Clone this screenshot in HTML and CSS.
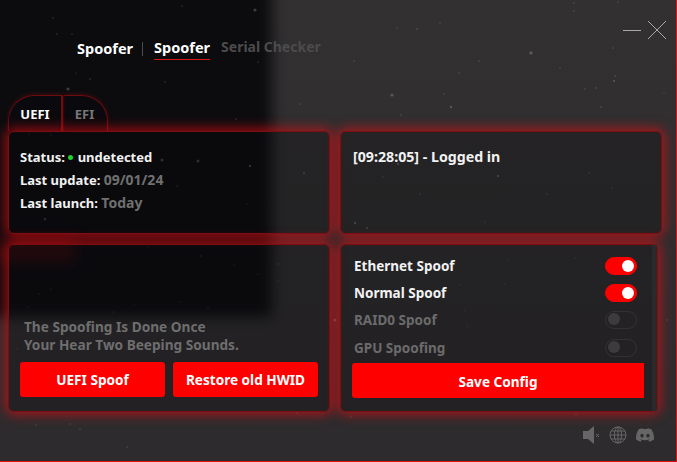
FILE: index.html
```html
<!DOCTYPE html>
<html lang="en">
<head>
  <meta charset="UTF-8">
  <title>Spoofer</title>
  <link rel="stylesheet" href="styles.css">
</head>
<body>
  <div class="window">
    <div class="shade"></div>
    <div class="blob"></div>
    <svg class="stars" width="677" height="462" viewBox="0 0 677 462">
      <g fill="#fff" fill-opacity="0.2">
        <circle cx="255" cy="10" r="1.6"/><circle cx="182" cy="6" r="0.7"/><circle cx="53" cy="18" r="0.7"/>
        <circle cx="57" cy="34" r="0.7"/><circle cx="72" cy="34" r="0.7"/><circle cx="68" cy="89" r="1.6"/>
        <circle cx="90" cy="79" r="0.8"/><circle cx="165" cy="82" r="0.7"/><circle cx="76" cy="73" r="0.6"/>
        <circle cx="258" cy="62" r="0.7"/><circle cx="300" cy="104" r="0.7"/><circle cx="236" cy="119" r="0.7"/>
        <circle cx="162" cy="160" r="1.6"/><circle cx="198" cy="161" r="1.5"/><circle cx="250" cy="166" r="1.3"/>
        <circle cx="304" cy="173" r="1"/><circle cx="177" cy="186" r="0.7"/><circle cx="45" cy="219" r="1.2"/>
        <circle cx="29" cy="134" r="0.6"/><circle cx="51" cy="135" r="0.6"/><circle cx="247" cy="204" r="0.6"/>
        <circle cx="136" cy="237" r="0.6"/><circle cx="148" cy="247" r="0.6"/><circle cx="201" cy="256" r="0.7"/>
        <circle cx="234" cy="265" r="0.6"/><circle cx="278" cy="264" r="0.7"/><circle cx="258" cy="274" r="0.6"/>
        <circle cx="278" cy="281" r="0.6"/><circle cx="51" cy="289" r="0.6"/><circle cx="39" cy="294" r="0.6"/>
        <circle cx="28" cy="307" r="0.6"/><circle cx="134" cy="304" r="0.6"/><circle cx="208" cy="308" r="0.6"/>
        <circle cx="113" cy="312" r="0.6"/><circle cx="180" cy="302" r="0.6"/><circle cx="17" cy="349" r="0.6"/>
        <circle cx="335" cy="320" r="1.6"/><circle cx="36" cy="425" r="0.7"/><circle cx="70" cy="424" r="0.7"/>
        <circle cx="80" cy="429" r="0.7"/><circle cx="127" cy="447" r="0.7"/><circle cx="297" cy="413" r="0.7"/>
        <circle cx="417" cy="29" r="0.8"/><circle cx="440" cy="23" r="0.7"/><circle cx="397" cy="28" r="0.7"/>
        <circle cx="354" cy="61" r="0.7"/><circle cx="479" cy="61" r="0.7"/><circle cx="459" cy="73" r="0.7"/>
        <circle cx="531" cy="53" r="1.7"/><circle cx="560" cy="68" r="0.7"/><circle cx="613" cy="48" r="0.7"/>
        <circle cx="615" cy="76" r="0.8"/><circle cx="614" cy="81" r="1.1"/><circle cx="596" cy="88" r="0.8"/>
        <circle cx="585" cy="89" r="0.7"/><circle cx="664" cy="93" r="0.6"/><circle cx="392" cy="95" r="1.6"/>
        <circle cx="444" cy="94" r="0.7"/><circle cx="451" cy="107" r="1.2"/><circle cx="601" cy="107" r="0.8"/>
        <circle cx="401" cy="115" r="0.7"/><circle cx="618" cy="2" r="0.7"/><circle cx="574" cy="3" r="0.7"/>
        <circle cx="574" cy="11" r="0.7"/><circle cx="383" cy="177" r="0.7"/><circle cx="398" cy="164" r="1.2"/>
        <circle cx="498" cy="176" r="1.2"/><circle cx="420" cy="194" r="0.7"/><circle cx="547" cy="194" r="0.7"/>
        <circle cx="589" cy="173" r="0.7"/><circle cx="612" cy="188" r="0.7"/><circle cx="355" cy="223" r="1.2"/>
        <circle cx="367" cy="228" r="1"/><circle cx="485" cy="222" r="0.6"/><circle cx="508" cy="260" r="0.6"/>
        <circle cx="575" cy="258" r="0.6"/><circle cx="505" cy="284" r="0.6"/><circle cx="460" cy="285" r="0.6"/>
        <circle cx="465" cy="310" r="0.6"/><circle cx="467" cy="326" r="0.6"/><circle cx="667" cy="320" r="0.7"/>
        <circle cx="576" cy="414" r="0.7"/><circle cx="351" cy="417" r="0.7"/>
      </g>
    </svg>

    <header class="topbar">
      <span class="brand">Spoofer</span>
      <span class="divider"></span>
      <nav class="nav">
        <a class="nav-item active">Spoofer</a>
        <a class="nav-item">Serial Checker</a>
      </nav>
      <div class="controls">
        <span class="minimize"></span>
        <svg class="close" width="18" height="18" viewBox="0 0 18 18">
          <path d="M0 0L18 18M18 0L0 18" stroke="#a9a9a9" stroke-width="1" fill="none"/>
        </svg>
      </div>
    </header>

    <div class="tabs">
      <div class="tab tab-on">UEFI</div>
      <div class="tab tab-off">EFI</div>
    </div>

    <main class="panels">
      <section class="card card-info">
        <div class="line">Status: <i class="dot"></i> undetected</div>
        <div class="line">Last update: <span class="muted">09/01/24</span></div>
        <div class="line">Last launch: <span class="muted">Today</span></div>
      </section>

      <section class="card card-log">
        <div class="line log-line">[09:28:05] - Logged in</div>
      </section>

      <section class="card card-actions">
        <p class="note">The Spoofing Is Done Once<br>Your Hear Two Beeping Sounds.</p>
        <div class="buttons">
          <button class="btn">UEFI Spoof</button>
          <button class="btn">Restore old HWID</button>
        </div>
      </section>

      <section class="card card-options">
        <div class="option"><span>Ethernet Spoof</span><span class="toggle on"></span></div>
        <div class="option"><span>Normal Spoof</span><span class="toggle on"></span></div>
        <div class="option off"><span>RAID0 Spoof</span><span class="toggle"></span></div>
        <div class="option off"><span>GPU Spoofing</span><span class="toggle"></span></div>
        <button class="btn btn-save">Save Config</button>
        <span class="scroll-track"></span>
      </section>
    </main>

    <footer class="tray">
      <svg width="18" height="18" viewBox="0 0 18 18">
        <path d="M1 5h5l6-5v18l-6-5H1z" fill="#666"/>
        <path d="M14 8l3 3M17 8l-3 3" stroke="#666" stroke-width="1" fill="none"/>
      </svg>
      <svg width="18" height="18" viewBox="0 0 18 18" fill="none" stroke="#666" stroke-width="1">
        <circle cx="9" cy="9" r="8"/>
        <ellipse cx="9" cy="9" rx="3.6" ry="8"/>
        <path d="M9 1v16M1 9h16M2 5h14M2 13h14"/>
      </svg>
      <svg width="18" height="18" viewBox="0 0 24 24">
        <path fill="#666" d="M20.317 4.37a19.791 19.791 0 0 0-4.885-1.515.074.074 0 0 0-.079.037c-.21.375-.444.864-.608 1.25a18.27 18.27 0 0 0-5.487 0 12.64 12.64 0 0 0-.617-1.25.077.077 0 0 0-.079-.037A19.736 19.736 0 0 0 3.677 4.37a.07.07 0 0 0-.032.027C.533 9.046-.32 13.58.099 18.057a.082.082 0 0 0 .031.057 19.9 19.9 0 0 0 5.993 3.03.078.078 0 0 0 .084-.028c.462-.63.874-1.295 1.226-1.994a.076.076 0 0 0-.041-.106 13.107 13.107 0 0 1-1.872-.892.077.077 0 0 1-.008-.128 10.2 10.2 0 0 0 .372-.292.074.074 0 0 1 .077-.01c3.928 1.793 8.18 1.793 12.062 0a.074.074 0 0 1 .078.01c.12.098.246.198.373.292a.077.077 0 0 1-.006.127 12.299 12.299 0 0 1-1.873.892.077.077 0 0 0-.041.107c.36.698.772 1.362 1.225 1.993a.076.076 0 0 0 .084.028 19.839 19.839 0 0 0 6.002-3.03.077.077 0 0 0 .032-.054c.5-5.177-.838-9.674-3.549-13.66a.061.061 0 0 0-.031-.03zM8.02 15.33c-1.183 0-2.157-1.085-2.157-2.419 0-1.333.956-2.419 2.157-2.419 1.21 0 2.176 1.096 2.157 2.42 0 1.333-.956 2.418-2.157 2.418zm7.975 0c-1.183 0-2.157-1.085-2.157-2.419 0-1.333.955-2.419 2.157-2.419 1.21 0 2.176 1.096 2.157 2.42 0 1.333-.946 2.418-2.157 2.418z"/>
      </svg>
    </footer>
  </div>
</body>
</html>
```

FILE: styles.css
```css
* {
  box-sizing: border-box;
}

html, body {
  margin: 0;
  height: 100%;
}

body {
  font-family: "Noto Sans", "Open Sans", sans-serif;
  font-weight: 700;
  font-size: 13px;
  color: #f2f2f2;
  background: #2f2d2e;
  overflow: hidden;
}

.window {
  position: relative;
  width: 677px;
  height: 462px;
  overflow: hidden;
  border-right: 1px solid #e01010;
  border-bottom: 1px solid #e01010;
  background: linear-gradient(#323031, #2d2b2d);
}

.shade {
  position: absolute;
  left: -30px;
  top: -30px;
  width: 302px;
  height: 347px;
  background: #0c0c0f;
  filter: blur(7px);
}

.blob {
  position: absolute;
  left: -10px;
  top: 238px;
  width: 85px;
  height: 24px;
  background: rgba(120, 10, 14, 0.3);
  filter: blur(7px);
}

.stars {
  position: absolute;
  left: 0;
  top: 0;
}

.topbar {
  position: relative;
  display: flex;
  align-items: flex-start;
  height: 95px;
  padding: 21px 10px 0 77px;
}

.brand {
  margin-top: 17px;
  font-size: 14.5px;
  line-height: 20px;
  color: #fff;
}

.divider {
  width: 1px;
  height: 14px;
  margin: 21px 11px 0 9px;
  background: #4d4d4d;
}

.nav {
  display: flex;
  gap: 11px;
  margin-top: 16px;
}

.nav-item {
  height: 23px;
  font-size: 14px;
  line-height: 20px;
  color: #4b4b4c;
}

.nav-item.active {
  font-size: 14.5px;
  color: #fff;
  border-bottom: 1px solid #d81414;
}

.controls {
  display: flex;
  align-items: center;
  gap: 7px;
  margin-left: auto;
}

.minimize {
  width: 18px;
  height: 1px;
  background: #a9a9a9;
}

.close {
  display: block;
}

.tabs {
  position: relative;
  display: flex;
  gap: 1px;
  height: 36px;
  margin-left: 8px;
}

.tab {
  display: flex;
  align-items: center;
  justify-content: center;
  height: 36px;
  border-top: 1px solid #6d0c10;
  background: rgba(8, 8, 12, 0.3);
  box-shadow: 0 -1px 4px rgba(200, 10, 14, 0.25);
}

.tab-on {
  width: 55px;
  border-left: 1px solid #5d0c10;
  border-right: 2px solid #6d0c10;
  border-top-left-radius: 26px;
  color: #fff;
}

.tab-off {
  width: 44px;
  padding-right: 2px;
  border-right: 1px solid #6d0c10;
  border-top-right-radius: 26px;
  color: #777;
}

.panels {
  position: relative;
  display: grid;
  grid-template-columns: 322px 322px;
  grid-template-rows: 103px 168px;
  gap: 10px;
  margin-left: 8px;
}

.card {
  position: relative;
  border: 1px solid #7c0e12;
  border-radius: 6px;
  background: rgba(8, 8, 12, 0.28);
  box-shadow: 0 0 12px 3px rgba(232, 12, 18, 0.62);
}

.card-info {
  padding: 14px 11px;
}

.card-log {
  padding: 13px 12px;
}

.line {
  height: 23px;
  line-height: 23px;
  white-space: nowrap;
}

.log-line {
  font-size: 14.2px;
}

.muted {
  font-size: 14px;
  line-height: 0;
  color: #707070;
}

.dot {
  display: inline-block;
  width: 5px;
  height: 5px;
  margin: 0 1px 2px 0;
  border-radius: 50%;
  background: #1ed32c;
}

.card-actions {
  display: flex;
  flex-direction: column;
  justify-content: flex-end;
  padding: 0 11px 14px;
}

.note {
  margin: 0 0 8px 4px;
  font-size: 13.65px;
  line-height: 18px;
  color: #6e6e6e;
}

.buttons {
  display: flex;
  gap: 8px;
}

.btn {
  width: 145px;
  height: 35px;
  padding: 0;
  border: none;
  border-radius: 3px;
  background: #ff0000;
  color: #fff;
  font-family: inherit;
  font-weight: 700;
  font-size: 13.6px;
}

.card-options {
  width: 318px;
  padding: 7px 0 0 13px;
  font-size: 13.5px;
}

.option {
  display: flex;
  align-items: center;
  justify-content: space-between;
  width: 283px;
  height: 27.3px;
}

.option.off {
  color: #6b6b6b;
}

.toggle {
  position: relative;
  display: block;
  width: 32px;
  height: 18px;
  border: 1px solid #333134;
  border-radius: 9px;
}

.toggle::after {
  content: "";
  position: absolute;
  left: 2px;
  top: 1px;
  width: 12px;
  height: 12px;
  border-radius: 50%;
  background: #3d3b3e;
}

.toggle.on {
  border-color: #ff0000;
  background: #ff0000;
}

.toggle.on::after {
  left: 16px;
  top: 2px;
  background: #fff;
}

.btn-save {
  display: block;
  width: 292px;
  margin: 2px 0 0 -2px;
  padding-top: 2px;
  border-radius: 3px 0 0 3px;
}

.scroll-track {
  position: absolute;
  right: 0;
  top: 0;
  bottom: 0;
  width: 5px;
  background: #2b292c;
}

.tray {
  position: relative;
  display: flex;
  justify-content: flex-end;
  gap: 9px;
  margin-top: 14px;
  padding-right: 22px;
}
```
